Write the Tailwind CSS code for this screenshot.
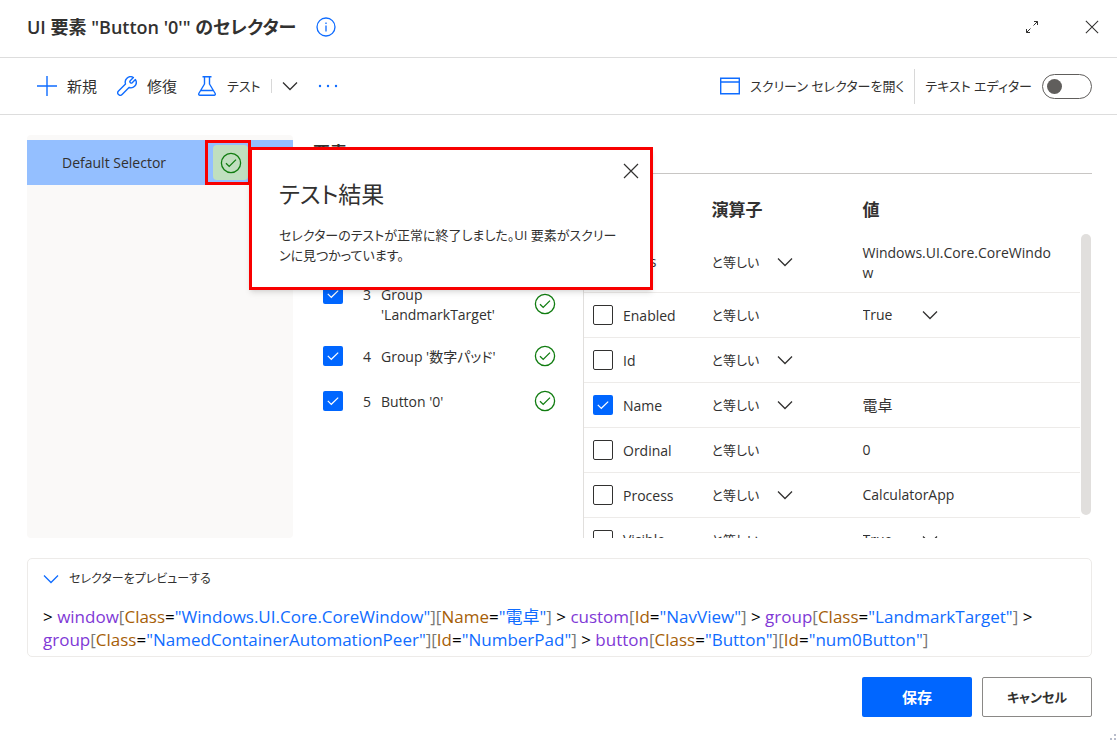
<!DOCTYPE html>
<html lang="ja">
<head>
<meta charset="utf-8">
<meta name="viewport" content="width=device-width, initial-scale=1">
<title>UI 要素のセレクター</title>
<script src="https://cdn.jsdelivr.net/npm/@tailwindcss/browser@4"></script>
</head>
<body class="flex h-screen flex-col overflow-hidden bg-white font-['Open_Sans','Noto_Sans_CJK_JP',sans-serif] text-sm leading-5 text-[#323130] [font-feature-settings:'palt']">
<svg class="hidden">
  <symbol id="chev" viewBox="0 0 16 16"><path d="M1 4.5 8 11.5 15 4.5" fill="none" stroke="currentColor" stroke-width="1.3"/></symbol>
  <symbol id="ok" viewBox="0 0 22 22"><circle cx="11" cy="11" r="9.6" fill="none" stroke="currentColor" stroke-width="1.3"/><path d="M6 11.2 9.2 14.4 16 7.6" fill="none" stroke="currentColor" stroke-width="1.3"/></symbol>
  <symbol id="tick" viewBox="0 0 20 20"><path d="M4.8 9.8 8.3 13.3 15.2 6.6" fill="none" stroke="currentColor" stroke-width="1.2"/></symbol>
  <symbol id="x" viewBox="0 0 16 16"><path d="M1 1 15 15M15 1 1 15" fill="none" stroke="currentColor" stroke-width="1.2"/></symbol>
</svg>

<header class="flex h-[58px] shrink-0 items-center border-b border-[#dddddd] pr-[18px] pb-1 pl-[27px]">
  <h1 class="text-lg font-semibold">UI 要素 "Button '0'" のセレクター</h1>
  <button aria-label="情報" class="ml-5 text-[#0f6cff]"><svg class="size-5" viewBox="0 0 20 20" fill="none" stroke="currentColor" stroke-width="1.3"><circle cx="10" cy="10" r="9"/><path d="M10 8.5V14.5M10 5.4V7"/></svg></button>
  <button aria-label="最大化" class="ml-auto"><svg class="size-[14px]" viewBox="0 0 14 14" fill="none" stroke="currentColor" stroke-width="1"><path d="M9 1.500H12.500V5M12.500 1.500 8.500 5.500M1.500 9V12.500H5M1.500 12.500 5.500 8.500"/></svg></button>
  <button aria-label="閉じる" class="ml-[46px]"><svg class="size-[14px]"><use href="#x"/></svg></button>
</header>

<div class="flex h-[57px] shrink-0 items-center border-b border-[#dddddd] pr-[25px] pl-[37px]">
  <button class="flex items-center gap-[10px] text-[15px]"><svg class="size-5 text-[#0f6cff]" viewBox="0 0 20 20"><path d="M10 0V20M0 10H20" stroke="currentColor" stroke-width="1.4"/></svg>新規</button>
  <button class="ml-5 flex items-center gap-[10px] text-[15px]"><svg class="size-5 text-[#0f6cff]" viewBox="0 0 20 20" fill="none" stroke="currentColor" stroke-width="1.4" stroke-linejoin="round"><path d="M16.400 1.600C14.200.3 11.400.6 9.700 2.400 8.200 3.900 7.900 6 8.500 7.900L1.500 14.900C.5 15.900.5 17.500 1.500 18.500 2.500 19.500 4.100 19.500 5.100 18.500L12 11.500C13.900 12.100 16.100 11.800 17.600 10.300 19.400 8.500 19.700 5.700 18.400 3.500L15.200 6.700C14.700 7.200 14 7.200 13.500 6.700L13.200 6.400C12.700 5.900 12.700 5.300 13.200 4.800Z"/></svg>修復</button>
  <button class="ml-5 flex items-center gap-[10px] text-[13px]"><svg class="size-5 text-[#0f6cff]" viewBox="0 0 20 20" fill="none" stroke="currentColor" stroke-width="1.4" stroke-linejoin="round"><path d="M5.500.8H14.500M7.500.8V8L1.800 17.500C1.400 18.300 1.900 19.200 2.800 19.200H17.200C18.100 19.200 18.600 18.300 18.200 17.500L12.500 8V.8M4 14.500H16"/></svg>テスト</button>
  <span class="ml-[10px] h-[14px] w-px bg-[#d8d8d8]"></span>
  <button aria-label="テストのオプション" class="ml-[10px]"><svg class="size-4"><use href="#chev"/></svg></button>
  <button aria-label="その他" class="ml-5 text-[#0f6cff]"><svg class="h-1 w-5" viewBox="0 0 20 4" fill="currentColor"><circle cx="2" cy="2" r="1.200"/><circle cx="10" cy="2" r="1.200"/><circle cx="18" cy="2" r="1.200"/></svg></button>
  <button class="ml-auto flex items-center gap-[10px] text-[13px]"><svg class="h-[18px] w-5 text-[#0f6cff]" viewBox="0 0 20 18" fill="none" stroke="currentColor" stroke-width="1.4"><path d="M.7 1.200H19.300V16.800H.7ZM.7 5H19.300"/></svg>スクリーン セレクターを開く</button>
  <span class="ml-[10px] h-[35px] w-px bg-[#d8d8d8]"></span>
  <label for="editor" class="ml-[10px] text-[13px]">テキスト エディター</label>
  <input id="editor" type="checkbox" role="switch" class="ml-[10px] flex h-[25px] w-[50px] appearance-none items-center rounded-full border border-[#605e5c] pl-1 before:size-[15px] before:rounded-full before:bg-[#605e5c]">
</div>

<main class="relative flex min-h-0 flex-1 pt-5 pr-[25px] pl-[27px]">
  <section class="w-[266px] shrink-0 rounded bg-[#faf9f8] pt-[5px]">
    <div class="flex h-[45px] items-center bg-[#94bfff]">
      <button class="h-full flex-1 pl-[35px] text-left">Default Selector</button>
      <div class="mr-[42px] flex h-full w-[46px] items-center border-3 border-[#f80000] pl-[5px]">
        <span class="flex size-[35px] shrink-0 items-center justify-center rounded-sm bg-[#c0dfbf] text-[#107c10]"><svg class="size-[22px]"><use href="#ok"/></svg></span>
      </div>
    </div>
  </section>

  <section class="ml-5 flex min-w-0 flex-1 flex-col overflow-hidden">
    <h2 class="h-[39px] shrink-0 border-b border-[#c8c6c4] pt-[6px] text-[17px] leading-6 font-semibold">要素</h2>
    <div class="flex min-h-0 flex-1 overflow-hidden">
      <ul class="w-[270px] shrink-0 pt-[100px]">
        <li class="flex h-[59px] items-center pr-[27px] pl-[10px]">
          <span class="grid self-start pt-[10px]"><input id="e3" type="checkbox" checked class="col-start-1 row-start-1 size-5 appearance-none rounded-xs bg-[#0066ff]"><svg class="pointer-events-none col-start-1 row-start-1 size-5 text-white"><use href="#tick"/></svg></span>
          <label for="e3" class="ml-5 flex flex-1 pt-[2px]"><span class="w-[18px]">3</span><span>Group<br>'LandmarkTarget'</span></label>
          <svg class="size-[22px] text-[#107c10]"><use href="#ok"/></svg>
        </li>
        <li class="flex h-[45px] items-center pr-[27px] pl-[10px]">
          <span class="grid"><input id="e4" type="checkbox" checked class="col-start-1 row-start-1 size-5 appearance-none rounded-xs bg-[#0066ff]"><svg class="pointer-events-none col-start-1 row-start-1 size-5 text-white"><use href="#tick"/></svg></span>
          <label for="e4" class="ml-5 flex flex-1 pt-[2px]"><span class="w-[18px]">4</span>Group '数字パッド'</label>
          <svg class="size-[22px] text-[#107c10]"><use href="#ok"/></svg>
        </li>
        <li class="flex h-[45px] items-center pr-[27px] pl-[10px]">
          <span class="grid"><input id="e5" type="checkbox" checked class="col-start-1 row-start-1 size-5 appearance-none rounded-xs bg-[#0066ff]"><svg class="pointer-events-none col-start-1 row-start-1 size-5 text-white"><use href="#tick"/></svg></span>
          <label for="e5" class="ml-5 flex flex-1 pt-[2px]"><span class="w-[18px]">5</span>Button '0'</label>
          <svg class="size-[22px] text-[#107c10]"><use href="#ok"/></svg>
        </li>
      </ul>

      <div class="min-w-0 flex-1">
        <table class="w-full table-fixed">
          <thead>
            <tr class="h-[59px] text-left text-[17px]">
              <th class="w-[128px]"></th>
              <th class="w-[151px] pt-3 font-semibold">演算子</th>
              <th class="pt-3 font-semibold">値</th>
            </tr>
          </thead>
          <tbody>
            <tr class="h-[59px] border-b border-[#edebe9]">
              <td class="border-l border-[#e1dfdd] pl-[9px]"><div class="flex items-center gap-[10px]"><span class="grid"><input id="a1" type="checkbox" checked class="col-start-1 row-start-1 size-5 appearance-none rounded-xs bg-[#0066ff]"><svg class="pointer-events-none col-start-1 row-start-1 size-5 text-white"><use href="#tick"/></svg></span><label for="a1">Class</label></div></td>
              <td><div class="grid w-[81px] items-center"><select aria-label="Class の演算子" class="col-start-1 row-start-1 appearance-none text-[13px]"><option>と等しい</option></select><svg class="pointer-events-none col-start-1 row-start-1 size-4 justify-self-end"><use href="#chev"/></svg></div></td>
              <td class="pt-[2px] pr-5 break-all">Windows.UI.Core.CoreWindow</td>
            </tr>
            <tr class="h-[45px] border-b border-[#edebe9]">
              <td class="border-l border-[#e1dfdd] pl-[9px]"><div class="flex items-center gap-[10px]"><input id="a2" type="checkbox" class="size-5 appearance-none rounded-xs border border-[#323130]"><label for="a2" class="pt-[2px]">Enabled</label></div></td>
              <td class="text-[13px]">と等しい</td>
              <td><div class="grid w-[75px] items-center"><select aria-label="Enabled の値" class="col-start-1 row-start-1 appearance-none"><option>True</option></select><svg class="pointer-events-none col-start-1 row-start-1 size-4 justify-self-end"><use href="#chev"/></svg></div></td>
            </tr>
            <tr class="h-[45px] border-b border-[#edebe9]">
              <td class="border-l border-[#e1dfdd] pl-[9px]"><div class="flex items-center gap-[10px]"><input id="a3" type="checkbox" class="size-5 appearance-none rounded-xs border border-[#323130]"><label for="a3" class="pt-[2px]">Id</label></div></td>
              <td><div class="grid w-[81px] items-center"><select aria-label="Id の演算子" class="col-start-1 row-start-1 appearance-none text-[13px]"><option>と等しい</option></select><svg class="pointer-events-none col-start-1 row-start-1 size-4 justify-self-end"><use href="#chev"/></svg></div></td>
              <td></td>
            </tr>
            <tr class="h-[45px] border-b border-[#edebe9]">
              <td class="border-l border-[#e1dfdd] pl-[9px]"><div class="flex items-center gap-[10px]"><span class="grid"><input id="a4" type="checkbox" checked class="col-start-1 row-start-1 size-5 appearance-none rounded-xs bg-[#0066ff]"><svg class="pointer-events-none col-start-1 row-start-1 size-5 text-white"><use href="#tick"/></svg></span><label for="a4" class="pt-[2px]">Name</label></div></td>
              <td><div class="grid w-[81px] items-center"><select aria-label="Name の演算子" class="col-start-1 row-start-1 appearance-none text-[13px]"><option>と等しい</option></select><svg class="pointer-events-none col-start-1 row-start-1 size-4 justify-self-end"><use href="#chev"/></svg></div></td>
              <td class="text-[15px]">電卓</td>
            </tr>
            <tr class="h-[45px] border-b border-[#edebe9]">
              <td class="border-l border-[#e1dfdd] pl-[9px]"><div class="flex items-center gap-[10px]"><input id="a5" type="checkbox" class="size-5 appearance-none rounded-xs border border-[#323130]"><label for="a5" class="pt-[2px]">Ordinal</label></div></td>
              <td class="text-[13px]">と等しい</td>
              <td>0</td>
            </tr>
            <tr class="h-[45px] border-b border-[#edebe9]">
              <td class="border-l border-[#e1dfdd] pl-[9px]"><div class="flex items-center gap-[10px]"><input id="a6" type="checkbox" class="size-5 appearance-none rounded-xs border border-[#323130]"><label for="a6" class="pt-[2px]">Process</label></div></td>
              <td><div class="grid w-[81px] items-center"><select aria-label="Process の演算子" class="col-start-1 row-start-1 appearance-none text-[13px]"><option>と等しい</option></select><svg class="pointer-events-none col-start-1 row-start-1 size-4 justify-self-end"><use href="#chev"/></svg></div></td>
              <td>CalculatorApp</td>
            </tr>
            <tr class="h-[45px]">
              <td class="border-l border-[#e1dfdd] pl-[9px]"><div class="flex items-center gap-[10px]"><input id="a7" type="checkbox" class="size-5 appearance-none rounded-xs border border-[#323130]"><label for="a7">Visible</label></div></td>
              <td class="text-[13px]">と等しい</td>
              <td><div class="grid w-[75px] items-center"><select aria-label="Visible の値" class="col-start-1 row-start-1 appearance-none"><option>True</option></select><svg class="pointer-events-none col-start-1 row-start-1 size-4 justify-self-end"><use href="#chev"/></svg></div></td>
            </tr>
          </tbody>
        </table>
      </div>
      <div class="mt-[60px] mr-px mb-[23px] ml-px w-[10px] shrink-0 rounded-full bg-[#e1dfdd]"></div>
    </div>
  </section>

  <div role="dialog" aria-labelledby="result" class="absolute top-8 left-[249px] w-[404px] border-3 border-[#f80000] bg-white px-[27px] pt-[26px] pb-[22px] shadow-md">
    <h2 id="result" class="text-[23px] leading-9">テスト結果</h2>
    <p class="mt-[13px] text-[13px]">セレクターのテストが正常に終了しました。UI 要素がスクリーンに見つかっています。</p>
    <button aria-label="閉じる" class="absolute top-[13px] right-[11px]"><svg class="size-4"><use href="#x"/></svg></button>
  </div>
</main>

<section class="mt-5 mr-[25px] ml-[27px] h-[99px] shrink-0 rounded-[5px] border border-[#edebe9] px-[15px] pt-[10px]">
  <button class="flex items-center gap-[10px] text-xs leading-5"><svg class="size-4 text-[#0f6cff]"><use href="#chev"/></svg>セレクターをプレビューする</button>
  <p class="mt-4 text-[17px] leading-[23px] text-[#797775]"><span class="text-black">&gt;</span> <span class="text-[#7f39d6]">window</span>[<span class="text-[#a65e07]">Class</span><span class="text-black">=</span><span class="text-[#0f6cff]">"Windows.UI.Core.CoreWindow"</span>][<span class="text-[#a65e07]">Name</span><span class="text-black">=</span><span class="text-[#0f6cff]">"電卓"</span>] <span class="text-black">&gt;</span> <span class="text-[#7f39d6]">custom</span>[<span class="text-[#a65e07]">Id</span><span class="text-black">=</span><span class="text-[#0f6cff]">"NavView"</span>] <span class="text-black">&gt;</span> <span class="text-[#7f39d6]">group</span>[<span class="text-[#a65e07]">Class</span><span class="text-black">=</span><span class="text-[#0f6cff]">"LandmarkTarget"</span>] <span class="text-black">&gt;</span><br><span class="text-[#7f39d6]">group</span>[<span class="text-[#a65e07]">Class</span><span class="text-black">=</span><span class="text-[#0f6cff]">"NamedContainerAutomationPeer"</span>][<span class="text-[#a65e07]">Id</span><span class="text-black">=</span><span class="text-[#0f6cff]">"NumberPad"</span>] <span class="text-black">&gt;</span> <span class="text-[#7f39d6]">button</span>[<span class="text-[#a65e07]">Class</span><span class="text-black">=</span><span class="text-[#0f6cff]">"Button"</span>][<span class="text-[#a65e07]">Id</span><span class="text-black">=</span><span class="text-[#0f6cff]">"num0Button"</span>]</p>
</section>

<footer class="relative mt-5 flex shrink-0 justify-end gap-[10px] pr-[25px] pb-6">
  <button class="h-10 w-[110px] rounded-xs bg-[#0066ff] text-[15px] font-semibold text-white">保存</button>
  <button class="h-10 w-[110px] rounded-xs border border-[#8a8886] text-[13px] font-semibold">キャンセル</button>
  <svg class="absolute right-0 bottom-0 size-[8px]" viewBox="0 0 8 8" fill="#b8bccb"><path d="M1 5h2v2H1zM5 5h2v2H5zM5 1h2v2H5z"/></svg>
</footer>
</body>
</html>
